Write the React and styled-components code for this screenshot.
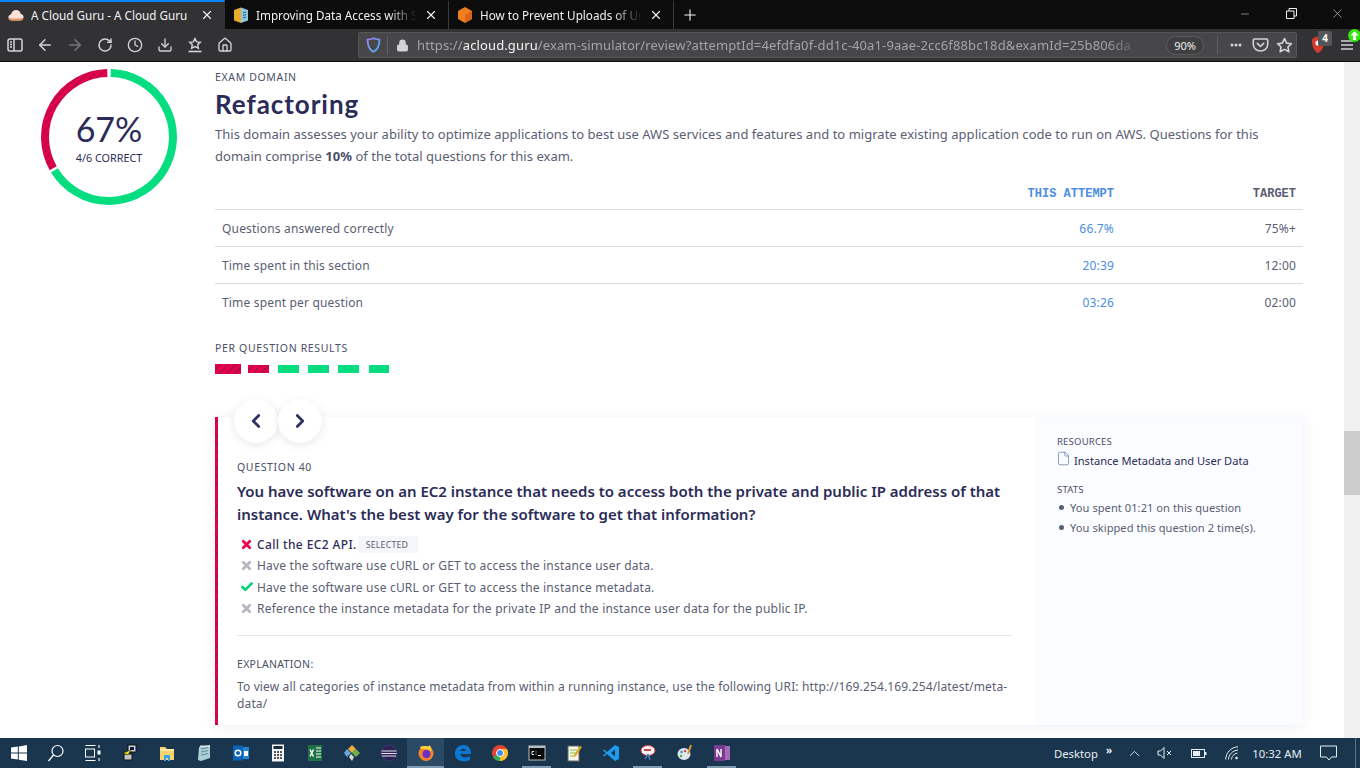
import React from 'react';
import styled, { createGlobalStyle, css } from 'styled-components';
import {
  ArrowLeft, ArrowRight, RotateCw, Clock, Download, Home, Lock, Plus, X, Minus, Check, ChevronLeft, ChevronRight, File, ChevronUp,
} from 'lucide-react';

const Global = createGlobalStyle`
  html, body { margin: 0; height: 768px; overflow: hidden; background: #fff; }
  body { font-family: "Noto Sans", "Open Sans", sans-serif; }
  * { box-sizing: border-box; }
`;

const stripes = css`
  background: repeating-linear-gradient(135deg, #ea0048 0 3px, #bd0a4e 3px 5.5px);
`;

const Screen = styled.div`
  width: 1360px;
  height: 768px;
  display: flex;
  flex-direction: column;
  overflow: hidden;
`;

// browser chrome
const TabBar = styled.div`
  height: 29px;
  flex: none;
  display: flex;
  align-items: stretch;
  background: #0c0c0d;
  color: #f1f1f2;
  font-size: 11.7px;
`;

const Tab = styled.div`
  width: ${(p) => p.$w}px;
  display: flex;
  align-items: center;
  gap: 7px;
  padding: 0 10px 2px 8px;
  background: ${(p) => (p.$active ? '#323234' : 'transparent')};
  border-top: 2px solid ${(p) => (p.$active ? '#0a84ff' : 'transparent')};
  border-right: 1px solid ${(p) => (p.$active ? 'transparent' : '#3a3a3c')};
  svg { flex: none; }
`;

const TabTitle = styled.span`
  flex: 1;
  white-space: nowrap;
  overflow: hidden;
  ${(p) => p.$fade && 'mask-image: linear-gradient(90deg, #000 82%, transparent 100%);'}
`;

const NewTab = styled.div`
  width: 32px;
  display: flex;
  align-items: center;
  justify-content: center;
`;

const WinControls = styled.div`
  margin-left: auto;
  display: flex;
  align-items: center;
  margin-top: -2px;
`;

const WinButton = styled.div`
  width: 46px;
  display: flex;
  justify-content: center;
`;

const Toolbar = styled.div`
  height: 33px;
  flex: none;
  display: flex;
  align-items: center;
  background: #323234;
  border-bottom: 1px solid #0c0c0d;
  color: #d4d4d6;
`;

const ToolButton = styled.div`
  width: 30px;
  height: 24px;
  flex: none;
  display: flex;
  align-items: center;
  justify-content: center;
  color: ${(p) => (p.$dim ? '#77777a' : '#d4d4d6')};
`;

const UrlBar = styled.div`
  width: 940px;
  height: 26px;
  margin-left: 118px;
  margin-right: 3px;
  display: flex;
  align-items: center;
  background: #474749;
  border: 1px solid #555557;
  border-radius: 2px;
  font-size: 13px;
`;

const UrlDivider = styled.span`
  width: 1px;
  height: 18px;
  background: #606062;
  flex: none;
`;

const UrlText = styled.div`
  width: 748px;
  white-space: nowrap;
  overflow: hidden;
  color: #a4a4a7;
  letter-spacing: 0.12px;
  mask-image: linear-gradient(90deg, #000 92%, transparent 97%);
  b { font-weight: 400; color: #f4f4f5; }
`;

const ZoomPill = styled.span`
  width: 38px;
  height: 19px;
  margin-left: 1px;
  border: 1px solid #5c5c5e;
  border-radius: 10px;
  background: #3f3f41;
  color: #eee;
  font-size: 11px;
  display: flex;
  align-items: center;
  justify-content: center;
  flex: none;
`;

const UrlIcon = styled.span`
  width: ${(p) => p.$w || 24}px;
  flex: none;
  display: flex;
  align-items: center;
  justify-content: center;
  color: #d4d4d6;
`;

const Extension = styled.div`
  position: relative;
  width: 29px;
  height: 26px;
  margin-left: ${(p) => p.$ml || 0}px;
  flex: none;
  display: flex;
  align-items: center;
  justify-content: center;
`;

const Badge = styled.span`
  position: absolute;
  top: -1px;
  left: 15px;
  width: 14px;
  height: 15px;
  background: #55565a;
  border-radius: 2px;
  color: #fff;
  font-size: 10px;
  font-weight: 700;
  text-align: center;
  line-height: 15px;
`;

const UpdateDot = styled.span`
  position: absolute;
  top: -3px;
  right: 0;
  width: 13px;
  height: 13px;
  border-radius: 50%;
  background: #30e60b;
  color: #fff;
  display: flex;
  align-items: center;
  justify-content: center;
`;

// page
const Viewport = styled.div`
  flex: 1;
  min-height: 0;
  display: flex;
  overflow: hidden;
`;

const Page = styled.div`
  flex: 1;
  display: grid;
  grid-template-columns: 215px 1088px;
  align-content: start;
  background: #fff;
  color: #3a3f5c;
`;

const ScoreColumn = styled.div`
  padding: 7px 0 0 41px;
`;

const Ring = styled.div`
  position: relative;
  width: 136px;
  height: 136px;
`;

const RingLabel = styled.div`
  position: absolute;
  inset: 0;
  display: flex;
  flex-direction: column;
  align-items: center;
  justify-content: center;
  color: #2b2c57;
`;

const RingValue = styled.div`
  font-family: Lato, sans-serif;
  font-size: 34px;
  line-height: 40px;
`;

const RingCaption = styled.div`
  font-size: 10.8px;
  line-height: 16px;
  margin-top: 1px;
`;

const Main = styled.div`
  display: flex;
  flex-direction: column;
`;

const Eyebrow = styled.div`
  font-size: 10.5px;
  line-height: 14px;
  letter-spacing: 0.65px;
  color: #4b4f68;
`;

const DomainEyebrow = styled(Eyebrow)`
  margin-top: 8px;
`;

const Heading = styled.h1`
  margin: 3px 0 0;
  font-family: Lato, sans-serif;
  font-size: 26px;
  line-height: 34px;
  font-weight: 700;
  letter-spacing: 0.95px;
  color: #2b2c57;
`;

const Intro = styled.p`
  margin: 2px 0 0;
  font-size: 13px;
  line-height: 22px;
  color: #5a5e73;
  letter-spacing: 0.02px;
  b { font-weight: 700; color: #4b4f68; }
`;

const Table = styled.div`
  margin-top: 8px;
  display: flex;
  flex-direction: column;
`;

const Row = styled.div`
  height: 37px;
  display: grid;
  grid-template-columns: 1fr 160px 182px;
  align-items: center;
  padding: 1px 7px 0;
  font-size: 12px;
  color: #5a5e73;
  letter-spacing: 0.17px;
  border-bottom: 1px solid ${(p) => (p.$last ? 'transparent' : '#dcdcdf')};
`;

const HeadRow = styled(Row)`
  height: 35px;
  padding: 4px 7px 0;
  font-family: "Liberation Mono", monospace;
  font-weight: 700;
  font-size: 12px;
  letter-spacing: 0;
`;

const Cell = styled.div`
  text-align: right;
  color: ${(p) => (p.$accent ? '#4d8ee0' : '#5a5e73')};
`;

const ResultsEyebrow = styled(Eyebrow)`
  margin-top: 20px;
`;

const ResultBars = styled.div`
  margin-top: 9px;
  height: 10px;
  display: flex;
  align-items: center;
`;

const ResultBar = styled.span`
  height: ${(p) => (p.$current ? 10 : 8)}px;
  width: ${(p) => p.$w}px;
  margin-right: ${(p) => p.$gap}px;
  ${(p) => (p.$wrong ? stripes : 'background: #05dd80;')}
`;

const Card = styled.div`
  position: relative;
  margin-top: 43px;
  height: 308px;
  display: grid;
  grid-template-columns: 820px 1fr;
  background: #fff;
  box-shadow: 0 2px 14px rgba(30, 40, 80, 0.07);
`;

const CardEdge = styled.div`
  position: absolute;
  left: 0;
  top: 0;
  bottom: 0;
  width: 3px;
  ${stripes}
`;

const NavButtons = styled.div`
  position: absolute;
  left: 19px;
  top: -18px;
  display: flex;
`;

const NavButton = styled.div`
  width: 44px;
  height: 44px;
  border-radius: 50%;
  background: #fff;
  box-shadow: 0 2px 8px rgba(30, 40, 80, 0.1);
  color: #2f3160;
  display: flex;
  align-items: center;
  justify-content: center;
`;

const CardBody = styled.div`
  padding: 43px 23px 0 22px;
  display: flex;
  flex-direction: column;
`;

const QuestionTitle = styled.h2`
  margin: 6px 0 0;
  font-size: 15px;
  line-height: 23px;
  font-weight: 600;
  letter-spacing: -0.01px;
  color: #2b2c57;
`;

const Answers = styled.ul`
  list-style: none;
  margin: 8px 0 0;
  padding: 0;
`;

const Answer = styled.li`
  height: 21.3px;
  display: flex;
  align-items: center;
  font-size: 12px;
  font-weight: ${(p) => (p.$selected ? 500 : 400)};
  letter-spacing: ${(p) => (p.$selected ? 0.38 : 0.2)}px;
  color: ${(p) => (p.$selected ? '#2b2c57' : '#5a5e73')};
`;

const AnswerMark = styled.span`
  width: 20px;
  flex: none;
  display: flex;
  align-items: center;
  padding-left: 3px;
  color: ${(p) => p.$color};
`;

const SelectedTag = styled.span`
  margin-left: 1px;
  height: 17px;
  padding: 0 10px 0 8px;
  border-radius: 2px;
  background: #f4f6fa;
  color: #5a5e73;
  font-size: 8.8px;
  font-weight: 400;
  letter-spacing: 0.2px;
  display: flex;
  align-items: center;
`;

const Divider = styled.hr`
  width: 100%;
  margin: 16px 0 0;
  border: 0;
  border-top: 1px solid #e8e8ec;
`;

const ExplainEyebrow = styled(Eyebrow)`
  margin-top: 21px;
  letter-spacing: 0.3px;
`;

const ExplainText = styled.p`
  margin: 7px 0 0;
  font-size: 12px;
  line-height: 17px;
  letter-spacing: 0.14px;
  color: #5a5e73;
`;

const Aside = styled.aside`
  background: #fbfcff;
  padding: 18px 22px;
`;

const AsideEyebrow = styled.div`
  font-size: 9.5px;
  line-height: 14px;
  letter-spacing: 0.2px;
  color: #4b4f68;
  margin-top: ${(p) => p.$mt || 0}px;
`;

const ResourceLink = styled.div`
  margin-top: 3px;
  display: flex;
  align-items: center;
  gap: 3px;
  font-size: 11.1px;
  line-height: 17px;
  color: #2b2c57;
  svg { color: #6e87ad; margin: -5px 0 0 -1px; }
`;

const StatList = styled.ul`
  list-style: none;
  margin: 0;
  padding: 0;
`;

const Stat = styled.li`
  height: 20px;
  display: flex;
  align-items: center;
  gap: 6px;
  font-size: 11.1px;
  letter-spacing: 0.05px;
  color: #5a5e73;
  &::before {
    content: '';
    width: 5px;
    height: 5px;
    margin-left: 2px;
    border-radius: 50%;
    background: #5a5e73;
  }
`;

const Scrollbar = styled.div`
  width: 16px;
  flex: none;
  background: #f0f0f0;
  padding-top: 369px;
`;

const ScrollThumb = styled.div`
  height: 64px;
  background: #cdcdcd;
`;

// taskbar
const Taskbar = styled.div`
  height: 30px;
  flex: none;
  display: flex;
  align-items: stretch;
  background: #19364e;
  color: #fff;
`;

const TaskButton = styled.div`
  position: relative;
  width: 37px;
  flex: none;
  display: flex;
  align-items: center;
  justify-content: center;
  background: ${(p) => (p.$active ? '#2a4a66' : 'transparent')};
  ${(p) =>
    p.$open &&
    css`
      &::after {
        content: '';
        position: absolute;
        bottom: 0;
        left: ${p.$active ? 0 : 4}px;
        right: ${p.$active ? 0 : 4}px;
        height: 2px;
        background: #7d9ab0;
      }
    `}
`;

const Tray = styled.div`
  margin-left: auto;
  display: flex;
  align-items: center;
  color: #e8edf1;
  font-size: 11.3px;
`;

const TrayItem = styled.div`
  width: ${(p) => p.$w}px;
  display: flex;
  justify-content: center;
  align-items: center;
  white-space: nowrap;
`;

const Chevrons = styled.sup`
  font-size: 10px;
  font-weight: 700;
  margin: -7px 0 0 8px;
`;

const ShowDesktop = styled.div`
  width: 5px;
  margin-left: 6px;
  align-self: stretch;
  border-left: 1px solid #5a7286;
`;

// browser icons
const SidebarIcon = () => (
  <svg width="16" height="16" viewBox="0 0 16 16" fill="none" stroke="currentColor" strokeWidth="1.5">
    <rect x="1" y="2" width="14" height="12" rx="2" /><path d="M7 2v12" /><path d="M3 5h2M3 7.5h2M3 10h2" />
  </svg>
);
const LibraryStar = () => (
  <svg width="16" height="16" viewBox="0 0 16 16" fill="none" stroke="currentColor" strokeWidth="1.4">
    <path d="M8 1.5l1.7 3.4 3.6.4-2.6 2.4.7 3.5L8 9.5l-3.4 1.7.7-3.5-2.6-2.4 3.6-.4z" /><path d="M1.5 14.5h13" strokeWidth="1.6" />
  </svg>
);
const ShieldBlue = () => (
  <svg width="15" height="16" viewBox="0 0 15 16" fill="none" strokeWidth="1.8">
    <path d="M7.5 1.2c2 1 4 1.4 6 1.4 0 6-1.5 10-6 12.2C3 12.6 1.5 8.6 1.5 2.6c2 0 4-.4 6-1.4z" stroke="url(#shieldGrad)" />
    <defs><linearGradient id="shieldGrad" x1="0" y1="0" x2="1" y2="1"><stop offset="0" stopColor="#a77cf5" /><stop offset="1" stopColor="#43b7f5" /></linearGradient></defs>
  </svg>
);
const PocketIcon = () => (
  <svg width="17" height="16" viewBox="0 0 17 16" fill="none" stroke="currentColor" strokeWidth="1.6" strokeLinecap="round" strokeLinejoin="round">
    <path d="M2.2 2h12.6c.5 0 .9.4.9.9v4.4c0 3.8-3.2 6.7-7.2 6.7s-7.2-2.9-7.2-6.7V2.9c0-.5.4-.9.9-.9z" /><path d="M5.3 6.4l3.2 3 3.2-3" />
  </svg>
);
const StarOutline = () => (
  <svg width="17" height="17" viewBox="0 0 17 17" fill="none" stroke="currentColor" strokeWidth="1.6" strokeLinejoin="round">
    <path d="M8.5 1.6l2.1 4.5 4.9.6-3.6 3.3 1 4.8-4.4-2.4-4.4 2.4 1-4.8-3.6-3.3 4.9-.6z" />
  </svg>
);
const MenuLines = () => (
  <svg width="14" height="12" viewBox="0 0 14 12" stroke="#d4d4d6" strokeWidth="1.6"><path d="M1 2h12M1 6h12M1 10h12" /></svg>
);
const BraveShield = () => (
  <svg width="14" height="18" viewBox="0 0 14 18">
    <path d="M7 17C3 15 .8 11 1 3.5L4 1h6l3 2.5C13.2 11 11 15 7 17z" fill="#d33a2c" /><circle cx="7" cy="7" r="2.6" fill="#fff" />
  </svg>
);
const CloudFavicon = () => (
  <svg width="16" height="12" viewBox="0 0 16 12">
    <path d="M4 11.5C1.8 11.5.4 10 .4 8.4.4 6.8 1.5 5.7 3 5.5 3.5 3 5.5 1 8 1c2.4 0 4.3 1.6 4.8 3.9 1.6.2 2.8 1.5 2.8 3.1 0 1.9-1.5 3.5-3.5 3.5z" fill="#f6e2d8" />
    <path d="M1 8.6c2 1.6 12 1.6 14 0-.4 1.8-1.4 2.9-3 2.9H4C2.4 11.5 1.3 10.4 1 8.6z" fill="#ef8f5e" />
  </svg>
);
const BookFavicon = () => (
  <svg width="16" height="16" viewBox="0 0 16 16">
    <path d="M1 3l7-2.4V16L1 13.5z" fill="#e8ab2c" /><path d="M8 .6L15 3v10.5L8 16z" fill="#8fc4dc" /><path d="M10 6l3-1M10 8.5l3-1M10 11l3-1" stroke="#25627f" strokeWidth="1" />
  </svg>
);
const CubeFavicon = () => (
  <svg width="16" height="16" viewBox="-1 0 16 16">
    <path d="M7 0l7 4v8l-7 4-7-4V4z" fill="#f0801e" /><path d="M7 8l7-4v8l-7 4z" fill="#d9661a" />
  </svg>
);

// taskbar icons
const Glyph = ({ children }) => <svg width="18" height="18" viewBox="0 0 18 18">{children}</svg>;

const taskIcons = [
  { key: 'start', icon: <Glyph><path d="M1 3.5l6.8-1v6H1zM8.800 2.400L17 1v7.500H8.800zM1 9.500h6.800v6l-6.800-1zM8.800 9.500H17V17l-8.200-1.200z" fill="#fff" /></Glyph> },
  { key: 'search', icon: <Glyph><circle cx="10.500" cy="7" r="5.500" fill="none" stroke="#fff" strokeWidth="1.200" /><path d="M6.500 11l-5 6" stroke="#fff" strokeWidth="1.300" /></Glyph> },
  { key: 'tasks', icon: <Glyph><path d="M1.500 1.500h10M1.500 16.500h10M15 1v3M15 14v3" stroke="#fff" strokeWidth="1.100" fill="none" /><rect x="1.500" y="5" width="9" height="8" fill="none" stroke="#fff" /><rect x="13.500" y="6.500" width="3" height="4" fill="#fff" /></Glyph> },
  { key: 'putty', icon: <Glyph><rect x="7" y="1" width="8" height="7" fill="#c9d6e6" stroke="#111" /><rect x="9" y="3" width="4" height="3" fill="#14143c" /><rect x="3" y="10" width="8" height="6" fill="#c5c5c5" stroke="#111" /><path d="M2 9l8-3-3 5z" fill="#f2e21b" stroke="#111" strokeWidth=".5" /></Glyph> },
  { key: 'folder', icon: <Glyph><path d="M2 3h5l2 2h7v11H2z" fill="#f5d371" /><path d="M6 17v-6h6v6h-2v-3H8v3z" fill="#35a5e5" /><path d="M2 5h14v2H2z" fill="#fdeaa0" /></Glyph> },
  { key: 'notepad', icon: <Glyph><path d="M4 3l11-2v13L6 17l-3-1z" fill="#a9cfd6" /><path d="M6 5l7-1.500M6 8l7-1.500M6 11l7-1.500" stroke="#5f8b95" /><path d="M5 1.500h10V3H5z" fill="#d8e5e8" /></Glyph> },
  { key: 'outlook', icon: <Glyph><rect x="7" y="3" width="10" height="12" fill="#1f86d8" /><rect x="1" y="1.500" width="10" height="15" fill="#0b63b3" /><circle cx="6" cy="9" r="2.800" fill="none" stroke="#fff" strokeWidth="1.500" /><path d="M12 7h4v5h-4z" fill="#fff" /></Glyph> },
  { key: 'calc', icon: <Glyph><rect x="3" y="0.500" width="12" height="17" fill="#f4f4f4" /><rect x="4.500" y="2" width="9" height="3" fill="#1a2c3d" /><path d="M5 8h2M8 8h2M11 8h2M5 11h2M8 11h2M11 11h2M5 14h2M8 14h2M11 14h2" stroke="#222" strokeWidth="1.300" /></Glyph> },
  { key: 'excel', icon: <Glyph><rect x="2" y="1" width="14" height="16" fill="#1f7246" /><path d="M10 4h5M10 7h5M10 10h5M10 13h5" stroke="#fff" /><path d="M4 5.500l3.500 7M7.500 5.500l-3.500 7" stroke="#fff" strokeWidth="1.400" /></Glyph> },
  { key: 'sourcetree', icon: <Glyph><path d="M9 1l4 4-4 4-4-4z" fill="#e9ae3c" /><path d="M4 5l4 4-4 4-3-4z" fill="#6ba5df" /><path d="M13 5l4 4-4 4-4-4z" fill="#6cb04c" /><path d="M8 10l3 3-2 4-3-4z" fill="#d9d9d9" /></Glyph> },
  { key: 'eclipse', icon: <Glyph><circle cx="9" cy="9" r="7.800" fill="#2c2255" stroke="#453a7a" strokeWidth=".8" /><path d="M1.500 7h15M1.300 9.500h15.400M2 12h14" stroke="#e7e3f2" strokeWidth="1.200" /></Glyph> },
  { key: 'firefox', active: true, open: true, icon: <Glyph><circle cx="9" cy="9.500" r="7.500" fill="#f7822a" /><circle cx="9.500" cy="10" r="4" fill="#6b2fc0" /><path d="M3 3c1 3 3 2 5 2 3 0 5 1 6 3 1-3 0-6-2-7 1 2-2 1-4 1-2 0-4 0-5 1z" fill="#fcd23a" /></Glyph> },
  { key: 'edge', icon: <Glyph><path d="M1 10C1 4.500 4.500 1 9.500 1 14 1 17 4 17 10H6.500c.3 3.500 5 4.500 9.500 2v4c-6 2.600-15 1.300-15-6zM6.500 7H12c0-3-5-3-5.500 0z" fill="#0c78d4" /></Glyph> },
  { key: 'chrome', icon: <Glyph><circle cx="9" cy="9" r="8" fill="#e3442f" /><path d="M9 9L2 13a8 8 0 0 0 7 4z" fill="#32a853" /><path d="M9 9v8a8 8 0 0 0 6.900-12H9z" fill="#fbc02d" /><circle cx="9" cy="9" r="3.500" fill="#4688f1" stroke="#fff" /></Glyph> },
  { key: 'cmd', open: true, icon: <Glyph><rect x="1" y="2" width="16" height="14" fill="#0b0b0b" stroke="#b9bdc2" /><rect x="1" y="2" width="16" height="2" fill="#b9bdc2" /><path d="M6 7.500H4v3h2M8 7.500v.8M8 9.700v.8M10 11.500h3" stroke="#e6e6e6" fill="none" /></Glyph> },
  { key: 'notepadpp', icon: <Glyph><rect x="3" y="2" width="11" height="15" fill="#f7f7ea" stroke="#666" /><path d="M5 6h7M5 9h7M5 12h5" stroke="#7fbf3f" /><path d="M9 11l6-9 2 1-6 9-3 1z" fill="#e7a31f" /></Glyph> },
  { key: 'vscode', icon: <Glyph><path d="M13 1l4 2v12l-4 2-8-7-3 2.500L1 11.500 4 9 1 6.500 2 5.500 5 8z" fill="#1f9cf0" /><path d="M13 5.500L9 9l4 3.500z" fill="#19364e" /></Glyph> },
  { key: 'snip', open: true, icon: <Glyph><ellipse cx="9" cy="6.500" rx="7" ry="5" fill="#f3f3f3" stroke="#d8424b" /><path d="M5 6h7" stroke="#d8424b" strokeWidth="2" /><path d="M9 10l2 6M9 10l-3 5" stroke="#4a86c5" strokeWidth="1.300" /></Glyph> },
  { key: 'paint', icon: <Glyph><ellipse cx="8" cy="10" rx="6.500" ry="6" fill="#dfe9ee" /><circle cx="5.500" cy="8" r="1.300" fill="#3a9ad9" /><circle cx="9" cy="7" r="1.300" fill="#e8513e" /><circle cx="5" cy="12" r="1.300" fill="#58b04b" /><path d="M15 1l-3 9" stroke="#d89a3e" strokeWidth="2" /></Glyph> },
  { key: 'onenote', open: true, icon: <Glyph><rect x="6" y="2" width="11" height="14" fill="#a66bb5" /><rect x="1" y="1" width="11" height="16" fill="#7b3a91" /><path d="M4 13V5l4 8V5" stroke="#fff" strokeWidth="1.400" fill="none" /></Glyph> },
];

const rows = [
  ['Questions answered correctly', '66.7%', '75%+'],
  ['Time spent in this section', '20:39', '12:00'],
  ['Time spent per question', '03:26', '02:00'],
];

const bars = [
  { w: 26, gap: 7, wrong: true, current: true },
  { w: 21, gap: 9, wrong: true },
  { w: 21, gap: 9 },
  { w: 21, gap: 9 },
  { w: 21, gap: 10 },
  { w: 20, gap: 0 },
];

const CrossMark = ({ color }) => (
  <AnswerMark $color={color}><X size={13} strokeWidth={5} /></AnswerMark>
);

const answers = [
  { text: 'Call the EC2 API.', mark: <CrossMark color="#e8004f" />, selected: true },
  { text: 'Have the software use cURL or GET to access the instance user data.', mark: <CrossMark color="#b4b7c2" /> },
  { text: 'Have the software use cURL or GET to access the instance metadata.', mark: <AnswerMark $color="#05d27a"><Check size={14} strokeWidth={4.5} /></AnswerMark> },
  { text: 'Reference the instance metadata for the private IP and the instance user data for the public IP.', mark: <CrossMark color="#b4b7c2" /> },
];

const ScoreRing = () => (
  <svg width="136" height="136" viewBox="0 0 136 136" fill="none">
    <defs>
      <pattern id="hatch" width="5" height="5" patternUnits="userSpaceOnUse" patternTransform="rotate(45)">
        <rect width="5" height="5" fill="#ea0048" />
        <rect width="2.300" height="5" fill="#bd0a4e" />
      </pattern>
    </defs>
    <path d="M69.700 4A64 64 0 1 1 13.400 101.400" stroke="#05dd80" strokeWidth="8" />
    <path d="M12.200 99.300A64 64 0 0 1 66.300 4" stroke="url(#hatch)" strokeWidth="8" />
  </svg>
);

export default function App() {
  return (
    <Screen>
      <Global />
      <TabBar>
        <Tab $w={225} $active>
          <CloudFavicon />
          <TabTitle>A Cloud Guru - A Cloud Guru</TabTitle>
          <X size={14} />
        </Tab>
        <Tab $w={224}>
          <BookFavicon />
          <TabTitle $fade>Improving Data Access with Secrets Manager</TabTitle>
          <X size={14} />
        </Tab>
        <Tab $w={225}>
          <CubeFavicon />
          <TabTitle $fade>How to Prevent Uploads of Unencrypted Objects</TabTitle>
          <X size={14} />
        </Tab>
        <NewTab><Plus size={18} strokeWidth={1.5} /></NewTab>
        <WinControls>
          <WinButton><Minus size={12} strokeWidth={1} /></WinButton>
          <WinButton>
            <svg width="11" height="11" viewBox="0 0 11 11" fill="none" stroke="#f1f1f2"><path d="M.5 3h7.500v7.500H.5zM3 3V.5h7.500V8H8" /></svg>
          </WinButton>
          <WinButton><X size={15} strokeWidth={0.9} /></WinButton>
        </WinControls>
      </TabBar>

      <Toolbar>
        <ToolButton><SidebarIcon /></ToolButton>
        <ToolButton><ArrowLeft size={18} /></ToolButton>
        <ToolButton $dim><ArrowRight size={18} /></ToolButton>
        <ToolButton><RotateCw size={16} strokeWidth={2.2} /></ToolButton>
        <ToolButton><Clock size={16} /></ToolButton>
        <ToolButton><Download size={16} /></ToolButton>
        <ToolButton><LibraryStar /></ToolButton>
        <ToolButton><Home size={16} /></ToolButton>
        <UrlBar>
          <UrlIcon $w={28}><ShieldBlue /></UrlIcon>
          <UrlDivider />
          <UrlIcon $w={29}><Lock size={13} fill="currentColor" /></UrlIcon>
          <UrlText>
            https://<b>acloud.guru</b>/exam-simulator/review?attemptId=4efdfa0f-dd1c-40a1-9aae-2cc6f88bc18d&amp;examId=25b806da
          </UrlText>
          <ZoomPill>90%</ZoomPill>
          <UrlIcon $w={13} />
          <UrlDivider />
          <UrlIcon $w={6} />
          <UrlIcon>
            <svg width="12" height="4" viewBox="0 0 12 4" fill="currentColor"><circle cx="2" cy="2" r="1.500" /><circle cx="6" cy="2" r="1.500" /><circle cx="10" cy="2" r="1.500" /></svg>
          </UrlIcon>
          <UrlIcon><PocketIcon /></UrlIcon>
          <UrlIcon><StarOutline /></UrlIcon>
        </UrlBar>
        <Extension $ml={3}>
          <BraveShield />
          <Badge>4</Badge>
        </Extension>
        <Extension>
          <MenuLines />
          <UpdateDot>
            <svg width="9" height="9" viewBox="0 0 9 9" fill="#fff"><path d="M4.500 0L8.500 4.500H6V9H3V4.500H.5z" /></svg>
          </UpdateDot>
        </Extension>
      </Toolbar>

      <Viewport>
        <Page>
          <ScoreColumn>
            <Ring>
              <ScoreRing />
              <RingLabel>
                <RingValue>67%</RingValue>
                <RingCaption>4/6 CORRECT</RingCaption>
              </RingLabel>
            </Ring>
          </ScoreColumn>
          <Main>
            <DomainEyebrow>EXAM DOMAIN</DomainEyebrow>
            <Heading>Refactoring</Heading>
            <Intro>
              This domain assesses your ability to optimize applications to best use AWS services and features and to migrate existing application code to run on AWS. Questions for this domain comprise <b>10%</b> of the total questions for this exam.
            </Intro>
            <Table>
              <HeadRow>
                <span />
                <Cell $accent>THIS ATTEMPT</Cell>
                <Cell>TARGET</Cell>
              </HeadRow>
              {rows.map(([label, attempt, target], i) => (
                <Row key={label} $last={i === rows.length - 1}>
                  <span>{label}</span>
                  <Cell $accent>{attempt}</Cell>
                  <Cell>{target}</Cell>
                </Row>
              ))}
            </Table>
            <ResultsEyebrow>PER QUESTION RESULTS</ResultsEyebrow>
            <ResultBars>
              {bars.map((b, i) => (
                <ResultBar key={i} $w={b.w} $gap={b.gap} $wrong={b.wrong} $current={b.current} />
              ))}
            </ResultBars>
            <Card>
              <CardEdge />
              <NavButtons>
                <NavButton><ChevronLeft size={22} strokeWidth={3} /></NavButton>
                <NavButton><ChevronRight size={22} strokeWidth={3} /></NavButton>
              </NavButtons>
              <CardBody>
                <Eyebrow>QUESTION 40</Eyebrow>
                <QuestionTitle>
                  You have software on an EC2 instance that needs to access both the private and public IP address of that instance. What's the best way for the software to get that information?
                </QuestionTitle>
                <Answers>
                  {answers.map((a) => (
                    <Answer key={a.text} $selected={a.selected}>
                      {a.mark}
                      {a.text}
                      {a.selected && <SelectedTag>SELECTED</SelectedTag>}
                    </Answer>
                  ))}
                </Answers>
                <Divider />
                <ExplainEyebrow>EXPLANATION:</ExplainEyebrow>
                <ExplainText>
                  To view all categories of instance metadata from within a running instance, use the following URI: http://169.254.169.254/latest/meta-data/
                </ExplainText>
              </CardBody>
              <Aside>
                <AsideEyebrow>RESOURCES</AsideEyebrow>
                <ResourceLink>
                  <File size={15} strokeWidth={1.3} />
                  Instance Metadata and User Data
                </ResourceLink>
                <AsideEyebrow $mt={14}>STATS</AsideEyebrow>
                <StatList>
                  <Stat>You spent 01:21 on this question</Stat>
                  <Stat>You skipped this question 2 time(s).</Stat>
                </StatList>
              </Aside>
            </Card>
          </Main>
        </Page>
        <Scrollbar><ScrollThumb /></Scrollbar>
      </Viewport>

      <Taskbar>
        {taskIcons.map((t) => (
          <TaskButton key={t.key} $active={t.active} $open={t.open}>{t.icon}</TaskButton>
        ))}
        <Tray>
          <TrayItem $w={72}>Desktop<Chevrons>»</Chevrons></TrayItem>
          <TrayItem $w={30}><ChevronUp size={17} strokeWidth={1.3} /></TrayItem>
          <TrayItem $w={32}>
            <svg width="16" height="14" viewBox="0 0 16 14" fill="none" stroke="#e8edf1"><path d="M1 5h2.500L7 1.500v11L3.500 9H1zM10 5l4 4M14 5l-4 4" /></svg>
          </TrayItem>
          <TrayItem $w={36}>
            <svg width="16" height="9" viewBox="0 0 16 9"><rect x=".5" y=".5" width="13" height="8" fill="none" stroke="#e8edf1" /><rect x="2" y="2" width="7" height="5" fill="#e8edf1" /><rect x="14" y="3" width="1.500" height="3" fill="#e8edf1" /></svg>
          </TrayItem>
          <TrayItem $w={30}>
            <svg width="14" height="14" viewBox="0 0 14 14" fill="none" stroke="#e8edf1"><path d="M.7 13.500C.7 7 6 1 13 .8M3.500 13.500C3.500 9 7.500 4.500 13 4M6.500 13.500c0-3 2.500-6 6-6.300" /><circle cx="11.500" cy="12" r="1.300" fill="#e8edf1" stroke="none" /></svg>
          </TrayItem>
          <TrayItem $w={60}>10:32 AM</TrayItem>
          <TrayItem $w={42}>
            <svg width="17" height="16" viewBox="0 0 17 16" fill="none" stroke="#e8edf1"><path d="M.5 1h16v11h-5L9 15l-2.500-3h-6z" /></svg>
          </TrayItem>
          <ShowDesktop />
        </Tray>
      </Taskbar>
    </Screen>
  );
}
